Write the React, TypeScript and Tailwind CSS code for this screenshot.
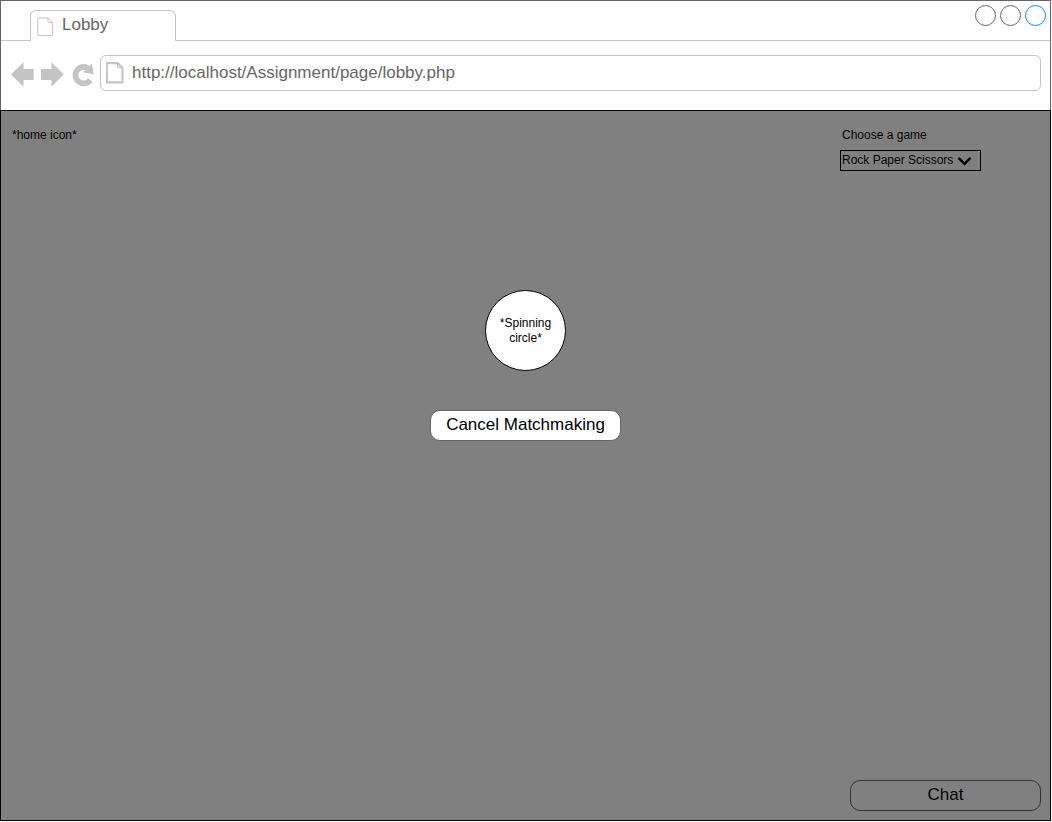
import React from "react";

function PageIcon({ className, strokeWidth }: { className: string; strokeWidth: number }) {
  return (
    <svg className={className} viewBox="0 0 17 20" fill="none" stroke="#c4c4c4" strokeWidth={strokeWidth} aria-hidden="true" preserveAspectRatio="none">
      <path d="M0.8 1H11L15.6 5.5V18.5H0.8Z" />
      <path d="M11 1V5.5H15.6" strokeWidth="1" />
    </svg>
  );
}

function BrowserTabs() {
  return (
    <div className="flex h-10">
      <div className="w-[29px] border-b border-[#c4c4c4]" />
      <div className="mt-[9px] flex w-[146px] gap-2 rounded-t-md border border-b-0 border-[#c4c4c4] pl-1.5">
        <PageIcon className="mt-1.5 h-5 w-[17px]" strokeWidth={1} />
        <span className="mt-1 h-5 text-[17px] leading-5 text-[#666]">Lobby</span>
      </div>
      <div className="flex flex-1 justify-end gap-1 border-b border-[#c4c4c4] pt-1 pr-1">
        <button aria-label="Minimize" className="size-[21px] rounded-full border border-[#666]" />
        <button aria-label="Maximize" className="size-[21px] rounded-full border border-[#666]" />
        <button aria-label="Close" className="size-[21px] rounded-full border border-[#008cff]" />
      </div>
    </div>
  );
}

function AddressBar() {
  return (
    <div className="flex items-center pt-3.5 pr-[9px] pb-[19px] pl-2.5">
      <button aria-label="Back" className="mr-1.5 mt-0.5">
        <svg className="h-[25px] w-6" viewBox="0 0 24 25" fill="#c4c4c4" aria-hidden="true">
          <path d="M0 12.5L12.5 0.3V7H22.7V18H12.5V24.7Z" />
        </svg>
      </button>
      <button aria-label="Forward" className="mr-1.5 mt-0.5">
        <svg className="h-[25px] w-6" viewBox="0 0 24 25" fill="#c4c4c4" aria-hidden="true">
          <path d="M22.8 12.5L10.5 0.3V7H0V18H10.5V24.7Z" />
        </svg>
      </button>
      <button aria-label="Reload" className="mr-1.5 mt-0.5">
        <svg className="h-[25px] w-[23px]" viewBox="0 0 23 25" aria-hidden="true">
          <path d="M19.3 18A8.2 8.2 0 1 1 17 6.2" fill="none" stroke="#c4c4c4" strokeWidth="5.8" />
          <path d="M20.8 1.5L22.8 12.3L12.3 10.4Z" fill="#c4c4c4" />
        </svg>
      </button>
      <div className="flex h-9 flex-1 items-center gap-2 rounded-md border border-[#c4c4c4] pl-[5px]">
        <PageIcon className="h-[22px] w-[18px]" strokeWidth={2} />
        <input
          aria-label="Address"
          type="text"
          defaultValue="http://localhost/Assignment/page/lobby.php"
          className="h-5 min-w-0 flex-1 bg-transparent text-[17px] leading-5 text-[#666] outline-none"
        />
      </div>
    </div>
  );
}

function GamePicker() {
  return (
    <div className="flex w-[141px] flex-col gap-[7px]">
      <label htmlFor="game" className="pl-0.5 leading-[15px]">
        Choose a game
      </label>
      <div className="grid">
        <select
          id="game"
          className="col-start-1 row-start-1 h-[21px] w-full appearance-none border border-black bg-transparent pb-0.5 pl-px text-xs outline-none"
        >
          <option>Rock Paper Scissors</option>
        </select>
        <svg
          className="pointer-events-none col-start-1 row-start-1 mr-2 h-3 w-4 self-center justify-self-end"
          viewBox="0 0 16 12"
          fill="none"
          stroke="black"
          strokeWidth="2.4"
          aria-hidden="true"
        >
          <path d="M1.5 2.8L7.5 8.8L13.5 2.8" />
        </svg>
      </div>
    </div>
  );
}

export default function App() {
  return (
    <div className="flex min-h-screen flex-col bg-white pr-px pb-px font-['Liberation_Sans',Arial,sans-serif]">
      <header className="border border-b-0 border-[#666]">
        <BrowserTabs />
        <AddressBar />
      </header>
      <main className="flex flex-1 flex-col border border-black bg-[#808080] text-xs text-black">
        <div className="flex items-start justify-between pt-[17px] pr-[69px] pl-[11px]">
          <span className="leading-[15px]">*home icon*</span>
          <GamePicker />
        </div>
        <div className="mt-[119px] flex flex-col items-center gap-[39px]">
          <div className="flex size-[81px] items-center justify-center rounded-full border border-black bg-white px-2 text-center leading-[15px]">
            *Spinning circle*
          </div>
          <button className="h-[31px] w-[191px] rounded-[10px] border border-[#666] bg-white pb-0.5 text-[17px] leading-5">
            Cancel Matchmaking
          </button>
        </div>
        <button className="mt-auto mr-[9px] mb-[9px] h-[31px] w-[191px] self-end rounded-[10px] border border-[#333] pb-0.5 text-[17px] leading-5">
          Chat
        </button>
      </main>
    </div>
  );
}
